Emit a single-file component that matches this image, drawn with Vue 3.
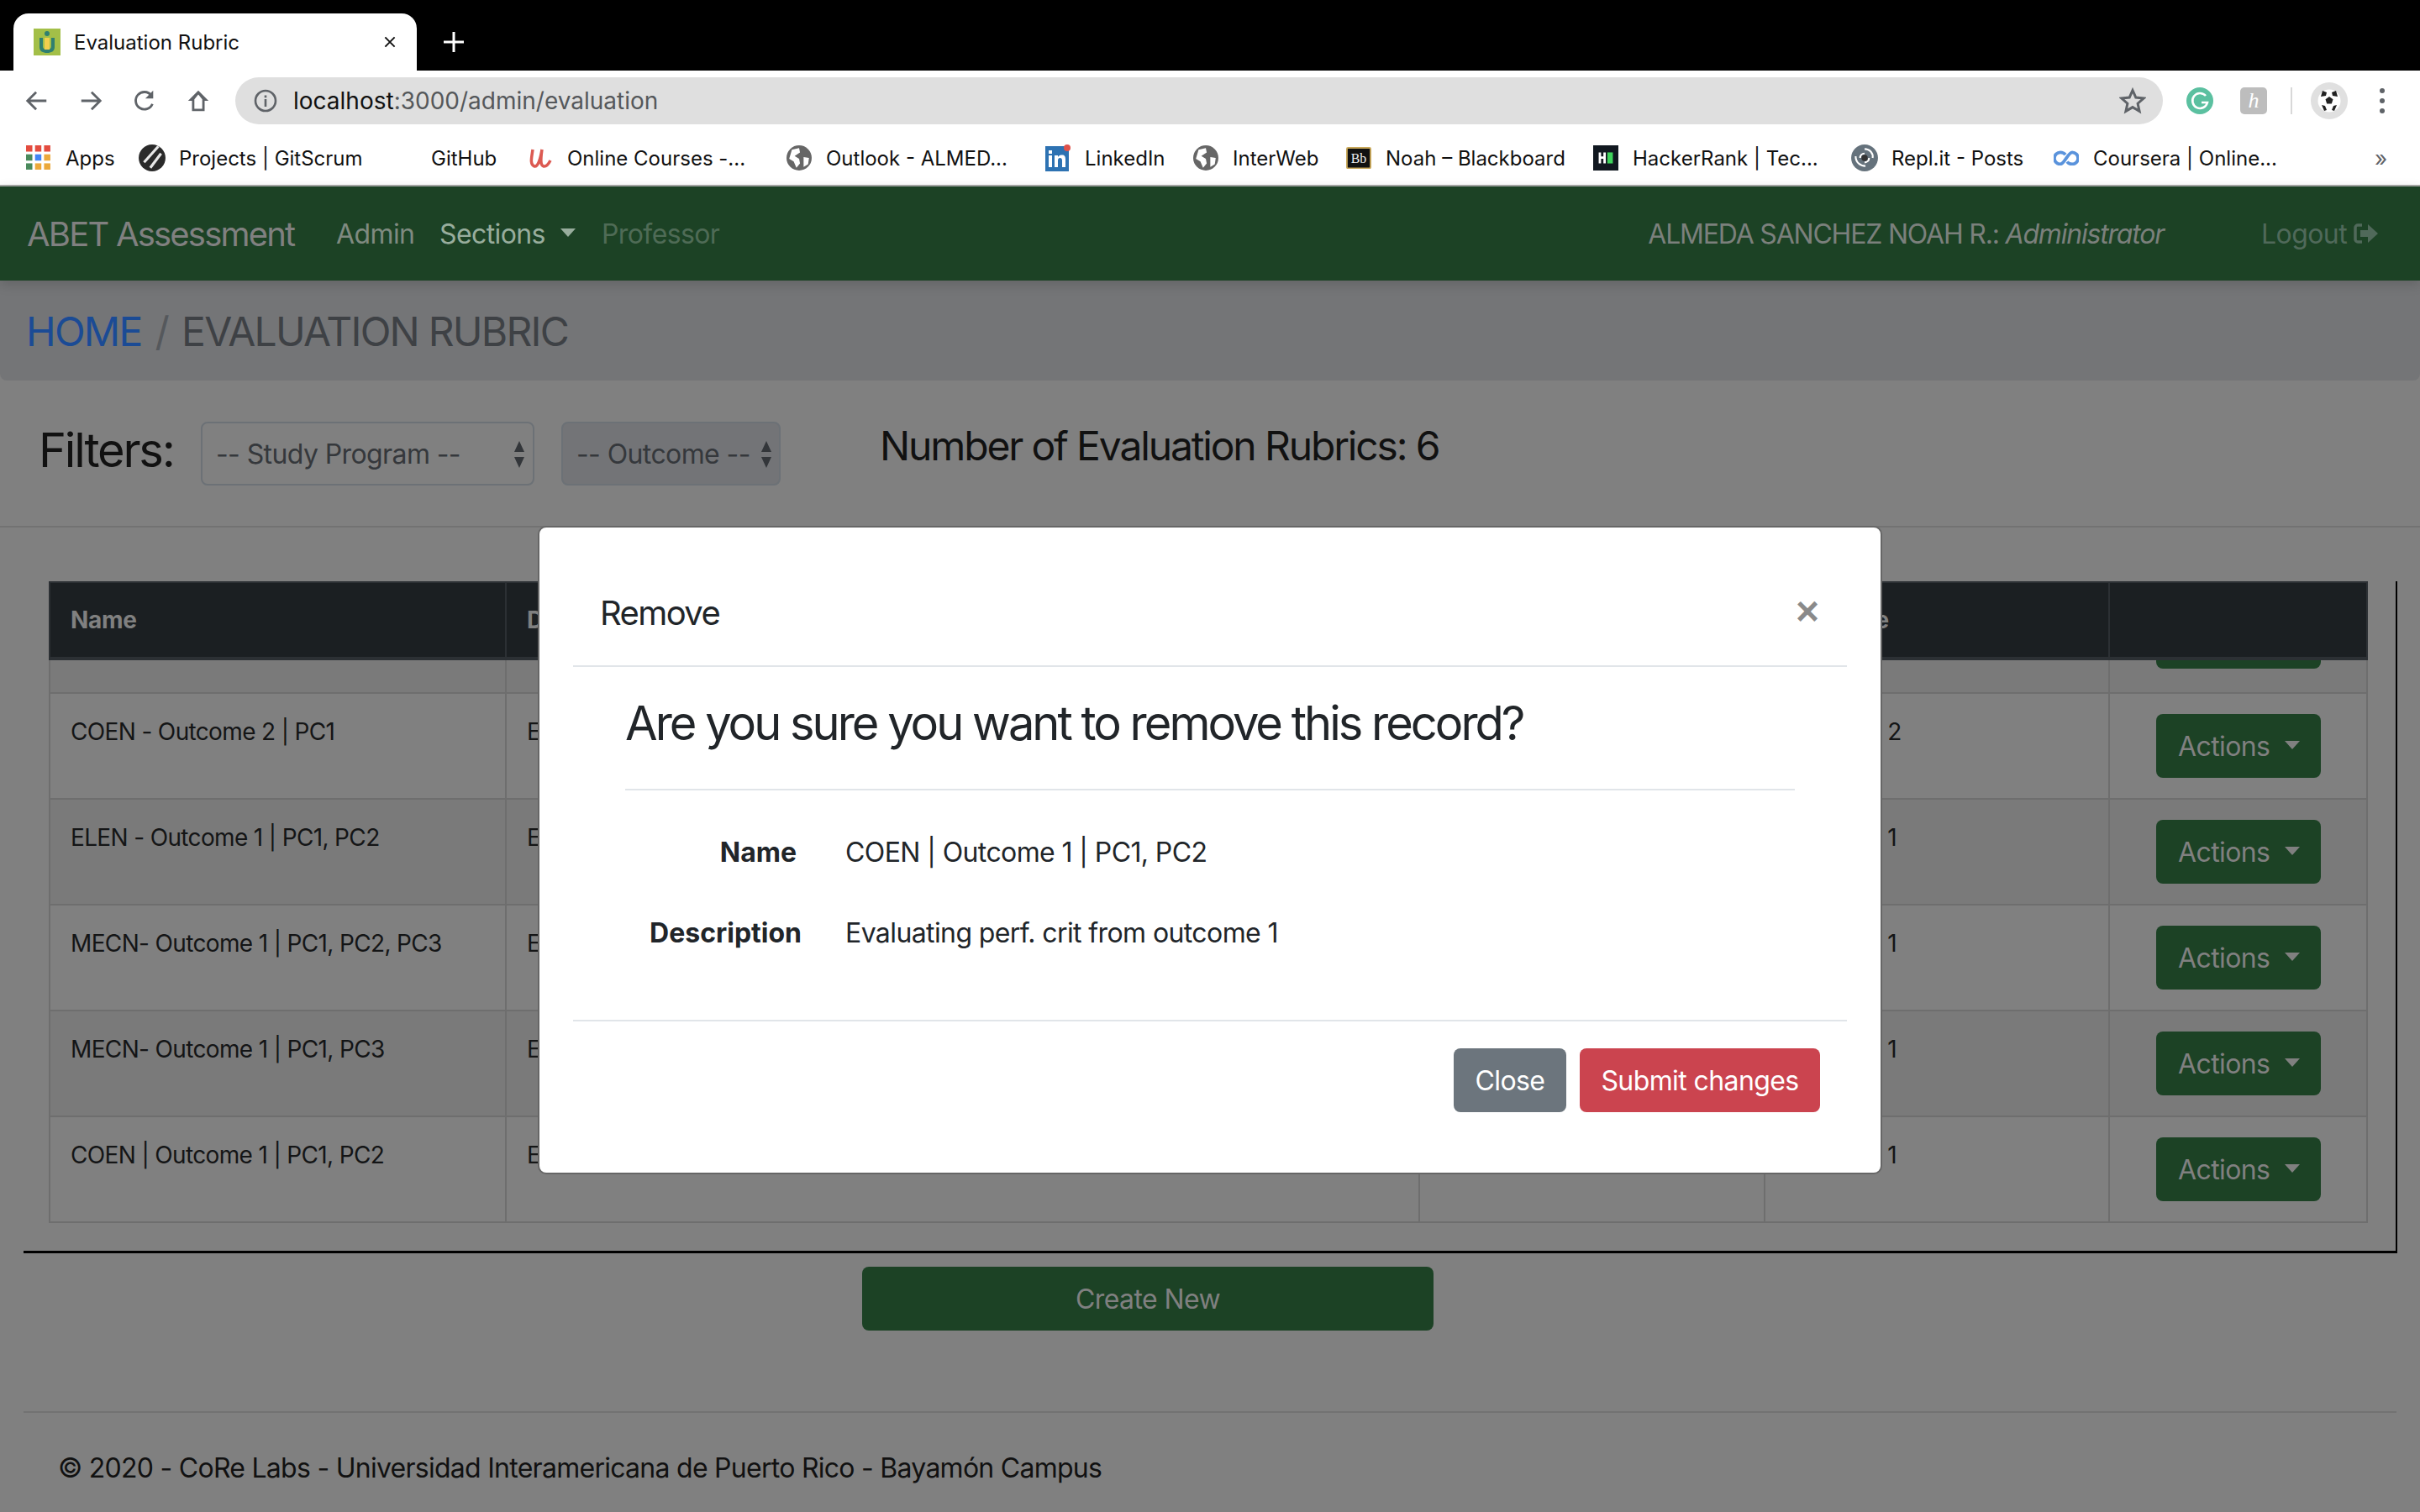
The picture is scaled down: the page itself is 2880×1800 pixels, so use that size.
<template>
  <div class="screen">
    <!-- browser chrome -->
    <div class="tabstrip">
      <div class="tab">
        <svg class="favicon" viewBox="0 0 32 32">
          <rect width="32" height="32" fill="#a3bf48" />
          <circle cx="16" cy="6" r="3" fill="#2f7f70" />
          <path d="M7 11h4v10c0 3 2 4 5 4s5-1 5-4V11h4v11c0 5-4 7-9 7s-9-2-9-7z" fill="#2f7f70" />
          <rect x="13" y="11" width="6" height="14" fill="#f2cf4e" />
        </svg>
        <span class="tab-title">Evaluation Rubric</span>
        <svg class="tab-close" viewBox="0 0 20 20"><path d="M3 3l14 14M17 3L3 17" stroke="#111" stroke-width="2.4" /></svg>
      </div>
      <svg class="tab-new" viewBox="0 0 26 26"><path d="M13 1v24M1 13h24" stroke="#fff" stroke-width="3" /></svg>
    </div>

    <div class="toolbar">
      <div class="tool">
        <svg viewBox="0 0 32 32"><path d="M28 16H5M15 5L4 16l11 11" fill="none" stroke="#5f6368" stroke-width="3" /></svg>
      </div>
      <div class="tool">
        <svg viewBox="0 0 32 32"><path d="M4 16h23M17 5l11 11-11 11" fill="none" stroke="#5f6368" stroke-width="3" /></svg>
      </div>
      <div class="tool">
        <svg viewBox="0 0 32 32"><path d="M26 20a11 11 0 1 1-1.500-11" fill="none" stroke="#5f6368" stroke-width="3" /><path d="M27 3v10H17z" fill="#5f6368" /></svg>
      </div>
      <div class="tool">
        <svg viewBox="0 0 32 32"><path d="M16 3L3 16h5v13h16V16h5zM11 26V14l5-6 5 6v12z" fill="#5f6368" fill-rule="evenodd" /></svg>
      </div>
      <div class="omnibox">
        <svg class="info" viewBox="0 0 28 28">
          <circle cx="14" cy="14" r="12" fill="none" stroke="#5f6368" stroke-width="2.600" />
          <rect x="12.700" y="12" width="2.600" height="9" fill="#5f6368" />
          <rect x="12.700" y="7.500" width="2.600" height="2.800" fill="#5f6368" />
        </svg>
        <span class="url"><b>localhost</b>:3000/admin/evaluation</span>
        <svg class="star" viewBox="0 0 32 32"><path d="M16 3.500l3.800 8.600 9.300.9-7 6.200 2 9.200-8.100-4.800-8.100 4.800 2-9.200-7-6.200 9.300-.9z" fill="none" stroke="#5f6368" stroke-width="3" /></svg>
      </div>
      <div class="ext-grammarly">
        <svg viewBox="0 0 32 32">
          <circle cx="16" cy="16" r="16" fill="#5bc0a0" />
          <path d="M23 10a9 9 0 1 0 2 8h-7" fill="none" stroke="#fff" stroke-width="2.600" />
        </svg>
      </div>
      <div class="ext-h"><span>h</span></div>
      <div class="tool-sep"></div>
      <div class="avatar">
        <svg viewBox="0 0 44 44">
          <circle cx="22" cy="22" r="22" fill="#e0e0e0" />
          <circle cx="22" cy="22" r="13.500" fill="#fff" />
          <path d="M22 17l4.500 3.300-1.700 5.200h-5.600l-1.700-5.200z" fill="#222" />
          <path d="M14 10l5 2-1 4-6 1zM30 10l-5 2 1 4 6 1zM13 27l4 1 2 5-3 1zM31 27l-4 1-2 5 3 1z" fill="#222" />
        </svg>
      </div>
      <div class="kebab"><i></i><i></i><i></i></div>
    </div>

    <div class="bookmarks">
      <div v-for="b in bookmarks" :key="b.label" class="bookmark" :style="{ width: b.width + 'px' }">
        <span class="bm-icon" :class="b.icon">
          <svg v-if="b.icon === 'apps'" viewBox="0 0 28 28">
            <g v-for="(row, r) in appColors" :key="r">
              <rect v-for="(c, i) in row" :key="i" :x="i * 10" :y="r * 10" width="7" height="7" :fill="c" />
            </g>
          </svg>
          <svg v-else-if="b.icon === 'gitscrum'" viewBox="0 0 32 32">
            <circle cx="16" cy="16" r="15" fill="#2a2a2a" />
            <path d="M23 3L7 21M26 11L14 27" stroke="#e8e8e8" stroke-width="3" />
          </svg>
          <svg v-else-if="b.icon === 'udemy'" viewBox="0 0 30 28">
            <path d="M6 4C5 12 2 22 8 24c4 1 7-8 9-20-1 8-3 19 2 20 3 .5 6-3 8-7" fill="none" stroke="#dc5a52" stroke-width="3.500" />
          </svg>
          <svg v-else-if="b.icon === 'globe'" viewBox="0 0 28 28">
            <circle cx="14" cy="14" r="14" fill="#666" />
            <path d="M6 5l8-2 1 5-6 4 5 3 1 5-4 5-3-7-5-3zM19 13l6 1-1 7-5 3z" fill="#fff" />
          </svg>
          <svg v-else-if="b.icon === 'linkedin'" viewBox="0 0 30 32">
            <rect y="2" width="28" height="30" fill="#2d72b2" />
            <rect x="4" y="13" width="4" height="14" fill="#fff" />
            <rect x="4" y="7" width="4" height="4" fill="#fff" />
            <path d="M11 13h4v2c1-2 3-2.500 5-2.500 3 0 4 2 4 5V27h-4v-8c0-2-1-3-2.500-3S15 17 15 19v8h-4z" fill="#fff" />
            <circle cx="26" cy="4" r="4" fill="#e0524b" />
          </svg>
          <svg v-else-if="b.icon === 'bb'" viewBox="0 0 32 28">
            <rect x="1" y="1" width="30" height="26" rx="1.500" fill="#111" stroke="#c9a85a" stroke-width="2" />
            <text x="16" y="20" text-anchor="middle" class="bb-text">Bb</text>
          </svg>
          <svg v-else-if="b.icon === 'hackerrank'" viewBox="0 0 32 32">
            <rect width="32" height="32" fill="#111820" />
            <path d="M7 9h3v5h3V9h3v14h-3v-6h-3v6H7z" fill="#fff" />
            <rect x="18" y="9" width="7" height="14" fill="#3fd45c" />
          </svg>
          <svg v-else-if="b.icon === 'repl'" viewBox="0 0 32 32">
            <circle cx="16" cy="16" r="15" fill="#65727c" />
            <path d="M16 6c6 0 10 5 9 10M6 14c0 7 5 11 11 11M11 16c0-3 2-5 5-5M21 16c0 3-2 5-5 5" fill="none" stroke="#fff" stroke-width="2" />
            <circle cx="16" cy="16" r="3.500" fill="#333" />
          </svg>
          <svg v-else-if="b.icon === 'coursera'" viewBox="0 0 32 20">
            <path d="M15 5.500C13 3 11 2.500 8.500 2.500a7.500 7.500 0 0 0 0 15c5 0 10-15 15-15a7.500 7.500 0 0 1 0 15c-2.500 0-4.500-.5-6.500-3" fill="none" stroke="#5a93dc" stroke-width="4" />
          </svg>
        </span>
        <span class="bm-label">{{ b.label }}</span>
      </div>
      <span class="bm-more">»</span>
    </div>

    <!-- page behind the modal -->
    <div class="page">
      <nav class="navbar">
        <span class="brand">ABET Assessment</span>
        <span class="nav-link admin">Admin</span>
        <span class="nav-link sections">Sections<i class="caret"></i></span>
        <span class="nav-link professor">Professor</span>
        <span class="nav-user">ALMEDA SANCHEZ NOAH R.: <em>Administrator</em></span>
        <span class="nav-logout">
          Logout
          <svg viewBox="0 0 30 26">
            <path d="M10 3H5a3 3 0 0 0-3 3v14a3 3 0 0 0 3 3h5" fill="none" stroke="#50695a" stroke-width="3.500" />
            <path d="M8 9h9V2l12 11-12 11v-7H8z" fill="#50695a" />
          </svg>
        </span>
      </nav>

      <div class="breadcrumb">
        <span class="crumb-home">HOME</span>
        <span class="crumb-sep">/</span>
        <span class="crumb-current">EVALUATION RUBRIC</span>
      </div>

      <div class="filters">
        <span class="filters-label">Filters:</span>
        <div class="select program">
          <span>-- Study Program --</span>
          <svg viewBox="0 0 14 34"><path d="M7 1l6 13H1zM7 33l6-13H1z" fill="#33363a" /></svg>
        </div>
        <div class="select outcome">
          <span>-- Outcome --</span>
          <svg viewBox="0 0 14 34"><path d="M7 1l6 13H1zM7 33l6-13H1z" fill="#33363a" /></svg>
        </div>
        <span class="count">Number of Evaluation Rubrics: 6</span>
      </div>

      <div class="table-box">
        <div class="rubrics">
          <div class="grid-row head">
            <div class="cell">Name</div>
            <div class="cell">Description</div>
            <div class="cell"></div>
            <div class="cell">Outcome</div>
            <div class="cell"></div>
          </div>
          <div class="rows">
            <div v-for="(row, i) in rows" :key="i" class="grid-row body-row" :class="{ partial: i === 0, striped: i % 2 === 0 }">
              <div class="cell">{{ row.name }}</div>
              <div class="cell">{{ row.description }}</div>
              <div class="cell"></div>
              <div class="cell outcome-cell">{{ row.outcome }}</div>
              <div class="cell actions-cell">
                <button class="actions-btn">Actions<i class="caret"></i></button>
              </div>
            </div>
          </div>
        </div>
      </div>

      <button class="create-btn">Create New</button>

      <footer class="page-footer">© 2020 - CoRe Labs - Universidad Interamericana de Puerto Rico - Bayamón Campus</footer>

      <!-- modal -->
      <div class="modal">
        <div class="modal-header">
          <span class="modal-title">Remove</span>
          <span class="modal-close">×</span>
        </div>
        <div class="modal-body">
          <h2 class="question">Are you sure you want to remove this record?</h2>
          <div class="divider"></div>
          <div class="record">
            <span class="record-label name-label">Name</span>
            <span>COEN | Outcome 1 | PC1, PC2</span>
            <span class="record-label">Description</span>
            <span>Evaluating perf. crit from outcome 1</span>
          </div>
        </div>
        <div class="modal-footer">
          <button class="btn-close">Close</button>
          <button class="btn-submit">Submit changes</button>
        </div>
      </div>
    </div>
  </div>
</template>

<script setup>
const appColors = [
  ['#e34c3f', '#e34c3f', '#e34c3f'],
  ['#4a8a5c', '#4285f4', '#eba83a'],
  ['#4a8a5c', '#eba83a', '#eba83a']
]

const bookmarks = [
  { label: 'Apps', icon: 'apps', width: 135 },
  { label: 'Projects | GitScrum', icon: 'gitscrum', width: 300 },
  { label: 'GitHub', icon: 'none', width: 162 },
  { label: 'Online Courses -...', icon: 'udemy', width: 308 },
  { label: 'Outlook - ALMED...', icon: 'globe', width: 308 },
  { label: 'LinkedIn', icon: 'linkedin', width: 176 },
  { label: 'InterWeb', icon: 'globe', width: 182 },
  { label: 'Noah – Blackboard', icon: 'bb', width: 294 },
  { label: 'HackerRank | Tec...', icon: 'hackerrank', width: 308 },
  { label: 'Repl.it - Posts', icon: 'repl', width: 240 },
  { label: 'Coursera | Online...', icon: 'coursera', width: 300 }
]

const rows = [
  { name: '', description: '', outcome: '' },
  { name: 'COEN - Outcome 2 | PC1', description: 'Evaluating perf. crit from outcome 2', outcome: 'Outcome 2' },
  { name: 'ELEN - Outcome 1 | PC1, PC2', description: 'Evaluating perf. crit from outcome 1', outcome: 'Outcome 1' },
  { name: 'MECN- Outcome 1 | PC1, PC2, PC3', description: 'Evaluating perf. crit from outcome 1', outcome: 'Outcome 1' },
  { name: 'MECN- Outcome 1 | PC1, PC3', description: 'Evaluating perf. crit from outcome 1', outcome: 'Outcome 1' },
  { name: 'COEN | Outcome 1 | PC1, PC2', description: 'Evaluating perf. crit from outcome 1', outcome: 'Outcome 1' }
]
</script>

<style>
html, body {
  margin: 0;
  background: #808080;
}
</style>

<style scoped>
.screen {
  width: 2880px;
  height: 1800px;
  overflow: hidden;
  position: relative;
  font-family: Inter, "Liberation Sans", sans-serif;
  color: #141516;
}

/* browser chrome */
.tabstrip {
  height: 84px;
  background: #000;
  display: flex;
  align-items: flex-end;
}

.tab {
  margin-left: 16px;
  width: 480px;
  height: 68px;
  background: #fff;
  border-radius: 18px 18px 0 0;
  display: flex;
  align-items: center;
  position: relative;
  box-sizing: border-box;
  padding-left: 24px;
}

.favicon {
  width: 32px;
  height: 32px;
}

.tab-title {
  margin-left: 16px;
  font-size: 24px;
  color: #111;
}

.tab-close {
  position: absolute;
  left: 440px;
  top: 26px;
  width: 16px;
  height: 16px;
}

.tab-new {
  width: 26px;
  height: 26px;
  margin: 0 0 21px 31px;
}

.toolbar {
  height: 80px;
  background: #fff;
  display: flex;
  align-items: center;
  padding-left: 12px;
  box-sizing: border-box;
  padding-bottom: 8px;
}

.tool {
  width: 64px;
  display: flex;
  justify-content: center;
}

.tool svg {
  width: 30px;
  height: 30px;
}

.omnibox {
  width: 2294px;
  height: 56px;
  border-radius: 28px;
  background: #dfdfdf;
  margin-left: 12px;
  display: flex;
  align-items: center;
  padding-left: 22px;
  padding-right: 20px;
  box-sizing: border-box;
}

.info {
  width: 28px;
  height: 28px;
}

.url {
  margin-left: 19px;
  font-size: 28px;
  color: #55585b;
}

.url b {
  font-weight: 400;
  color: #111;
}

.star {
  margin-left: auto;
  width: 32px;
  height: 32px;
}

.ext-grammarly {
  margin-left: 28px;
  width: 32px;
  height: 32px;
}

.ext-h {
  margin-left: 32px;
  width: 32px;
  height: 32px;
  border-radius: 5px;
  background: #bdbdbd;
  color: #fff;
  font-family: "Liberation Serif", serif;
  font-style: italic;
  font-size: 26px;
  line-height: 32px;
  text-align: center;
}

.tool-sep {
  margin-left: 28px;
  width: 2px;
  height: 32px;
  background: #d8d8d8;
}

.avatar {
  margin-left: 22px;
  width: 44px;
  height: 44px;
}

.kebab {
  margin-left: 38px;
  display: flex;
  flex-direction: column;
  gap: 6px;
}

.kebab i {
  display: block;
  width: 6px;
  height: 6px;
  border-radius: 50%;
  background: #5f6368;
}

.bookmarks {
  height: 58px;
  background: #fff;
  border-bottom: 2px solid #a9aaa8;
  box-sizing: border-box;
  display: flex;
  align-items: center;
  padding-left: 31px;
  padding-bottom: 8px;
  font-size: 24px;
  position: relative;
}

.bookmark {
  display: flex;
  align-items: center;
  flex: none;
}

.bm-icon {
  width: 30px;
  height: 32px;
  display: flex;
  align-items: center;
  justify-content: center;
  flex: none;
}

.bm-icon svg {
  width: 100%;
  max-height: 32px;
  flex: none;
}

.bm-icon.gitscrum svg,
.bm-icon.repl svg {
  width: 34px;
  max-height: 34px;
}

.bm-label {
  margin-left: 17px;
  white-space: nowrap;
  color: #111;
}

.bb-text {
  font-family: "Liberation Serif", serif;
  font-size: 17px;
  fill: #eee;
}

.bm-more {
  position: absolute;
  left: 2826px;
  top: 9px;
  color: #5f6368;
  font-size: 26px;
}

/* page */
.page {
  height: 1578px;
  background: #808080;
  position: relative;
  letter-spacing: -0.6px;
}

.navbar {
  height: 112px;
  background: #1c4225;
  display: flex;
  align-items: center;
  padding: 0 48px 0 32px;
  box-shadow: 0 4px 14px rgba(0, 0, 0, 0.16);
  position: relative;
  font-size: 32px;
}

.brand {
  font-size: 40px;
  letter-spacing: -1.8px;
  color: #808080;
  width: 368px;
}

.nav-link {
  display: inline-flex;
  align-items: center;
}

.admin {
  color: #7f8a80;
  width: 123px;
}

.sections {
  color: #98ad9d;
  width: 193px;
}

.professor {
  color: #4f6b56;
}

.caret {
  display: inline-block;
  margin-left: 18px;
  border-left: 9px solid transparent;
  border-right: 9px solid transparent;
  border-top: 10px solid currentColor;
  margin-top: -2px;
}

.nav-user {
  margin-left: auto;
  color: #7b807c;
  letter-spacing: -1.2px;
}

.nav-logout {
  margin-left: 116px;
  color: #50695a;
  display: inline-flex;
  align-items: center;
  gap: 8px;
  padding-right: 1px;
}

.nav-logout svg {
  width: 30px;
  height: 26px;
}

.breadcrumb {
  height: 119px;
  background: #747577;
  border-radius: 0 0 8px 8px;
  display: flex;
  align-items: center;
  padding-left: 31px;
  padding-top: 2px;
  font-size: 48px;
  letter-spacing: -1.76px;
  box-sizing: border-box;
}

.crumb-home {
  color: #1b4b95;
}

.crumb-sep {
  margin: 0 16px;
  color: #55585c;
}

.crumb-current {
  color: #3e4145;
}

.filters {
  height: 175px;
  border-bottom: 2px solid #727272;
  box-sizing: border-box;
  padding: 49px 0 0 46px;
  display: flex;
  align-items: flex-start;
}

.filters-label {
  font-size: 56px;
  line-height: 69px;
  letter-spacing: -2.2px;
  width: 193px;
  color: #111;
}

.select {
  height: 76px;
  box-sizing: border-box;
  border: 2px solid #6c7176;
  border-radius: 8px;
  display: flex;
  align-items: center;
  font-size: 32px;
  color: #35383c;
  position: relative;
}

.select svg {
  position: absolute;
  top: 20px;
  width: 14px;
  height: 34px;
}

.program {
  width: 397px;
  padding-left: 16px;
}

.program svg {
  left: 370px;
}

.outcome {
  width: 261px;
  margin-left: 32px;
  padding-left: 16px;
  background: #737477;
}

.outcome svg {
  left: 235px;
}

.count {
  margin-left: 118px;
  font-size: 48px;
  line-height: 58px;
  letter-spacing: -2.15px;
  color: #111;
}

.table-box {
  margin: 64px 0 0 28px;
  width: 2825px;
  height: 800px;
  box-sizing: border-box;
  border-right: 2px solid #000;
  border-bottom: 3px solid #000;
  padding-left: 30px;
}

.rubrics {
  width: 2760px;
  font-size: 28px;
  letter-spacing: -0.65px;
}

.grid-row {
  display: grid;
  grid-template-columns: 543px 1087px 411px 410px 305px;
}

.head {
  height: 94px;
  background: #1b1f22;
  border: 2px solid #2c3034;
  border-bottom-width: 4px;
  box-sizing: border-box;
  color: #808080;
  font-weight: 700;
  letter-spacing: -0.3px;
}

.head .cell {
  border-right: 2px solid #2c3034;
  padding: 0 24px;
  display: flex;
  align-items: center;
  box-sizing: border-box;
}

.head .cell:last-child {
  border-right: none;
}

.rows {
  height: 670px;
  overflow: hidden;
  border-left: 2px solid #6e6e6e;
  border-right: 2px solid #6e6e6e;
  box-sizing: border-box;
}

.body-row {
  height: 126px;
  box-sizing: border-box;
  border-bottom: 2px solid #6e6e6e;
}

.body-row.striped {
  background: #7a7a7a;
}

.body-row.partial {
  margin-top: -86px;
}

.body-row .cell {
  border-right: 2px solid #6e6e6e;
  padding: 24px 24px 0;
  line-height: 42px;
  box-sizing: border-box;
  white-space: nowrap;
  overflow: hidden;
}

.body-row .cell:last-child {
  border-right: none;
}

.body-row .outcome-cell {
  padding-left: 22px;
}

.body-row .actions-cell {
  padding-left: 55px;
}

.body-row.partial .actions-cell {
  padding-top: 20px;
}

.actions-btn {
  width: 196px;
  height: 76px;
  background: #1c4225;
  color: #808080;
  border: none;
  border-radius: 8px;
  font-family: inherit;
  font-size: 32px;
  letter-spacing: -0.6px;
  display: flex;
  align-items: center;
  padding: 0 0 0 26px;
}

.create-btn {
  display: block;
  margin: 16px 0 0 1026px;
  width: 680px;
  height: 76px;
  background: #1c4225;
  color: #808080;
  border: none;
  border-radius: 8px;
  font-family: inherit;
  font-size: 32px;
  letter-spacing: -0.6px;
}

.page-footer {
  margin: 96px 28px 0;
  border-top: 2px solid #727272;
  padding: 42px 0 0 41px;
  font-size: 32px;
  line-height: 48px;
  letter-spacing: -0.73px;
  color: #111;
}

.modal {
  position: absolute;
  left: 640px;
  top: 404px;
  width: 1600px;
  height: 772px;
  box-sizing: border-box;
  background: #fff;
  border: 2px solid #666;
  border-radius: 10px;
  display: flex;
  flex-direction: column;
  color: #212529;
}

.modal-header {
  height: 166px;
  margin: 0 40px;
  border-bottom: 2px solid #e1e5e9;
  box-sizing: border-box;
  padding: 72px 0 0 32px;
  display: flex;
  justify-content: space-between;
}

.modal-title {
  font-size: 40px;
  line-height: 60px;
  letter-spacing: -1.6px;
}

.modal-close {
  font-family: "Liberation Sans", sans-serif;
  font-size: 48px;
  line-height: 56px;
  font-weight: 700;
  color: #8a8a8a;
  margin-right: 33px;
  letter-spacing: 0;
}

.modal-body {
  padding: 34px 0 0 102px;
}

.question {
  margin: 0;
  font-size: 56px;
  line-height: 67px;
  font-weight: 400;
  letter-spacing: -3px;
}

.divider {
  margin-top: 44px;
  width: 1392px;
  height: 2px;
  background: #e1e5e9;
}

.record {
  margin-top: 50px;
  display: grid;
  grid-template-columns: 210px auto;
  column-gap: 52px;
  grid-auto-rows: 96px;
  font-size: 32px;
  line-height: 48px;
}

.record-label {
  font-weight: 700;
  text-align: right;
  letter-spacing: 0;
}

.name-label {
  padding-right: 6px;
}

.modal-footer {
  margin: auto 40px 0;
  height: 182px;
  box-sizing: border-box;
  border-top: 2px solid #e1e5e9;
  padding: 32px 32px 0 0;
  display: flex;
  justify-content: flex-end;
  gap: 16px;
}

.modal-footer button {
  height: 76px;
  border: none;
  border-radius: 8px;
  color: #fff;
  font-family: inherit;
  font-size: 32px;
  letter-spacing: -0.6px;
}

.btn-close {
  width: 134px;
  background: #6c757d;
}

.btn-submit {
  width: 286px;
  background: #cb444f;
}
</style>
